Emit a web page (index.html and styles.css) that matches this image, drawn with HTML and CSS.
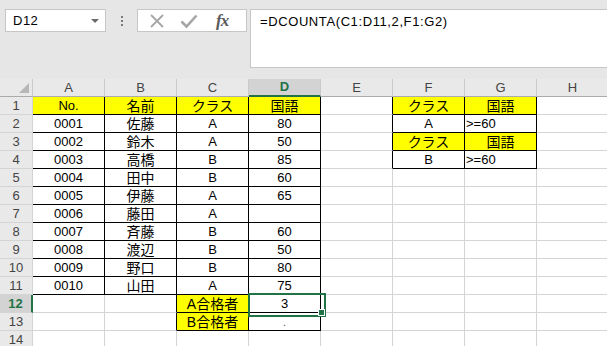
FILE: index.html
```html
<!DOCTYPE html>
<html lang="ja">
<head>
  <meta charset="UTF-8" />
  <title>DCOUNTA</title>
  <link rel="stylesheet" href="styles.css">
</head>
<body>
  <div class="formula-strip">
    <div class="name-box">
      <span class="name-box-text">D12</span>
      <span class="name-box-arrow"></span>
    </div>
    <div class="grip"><span></span><span></span><span></span></div>
    <div class="fx-buttons">
      <svg class="fx-icon" width="16" height="16" viewBox="0 0 16 16"><path d="M2 2l12 12M14 2L2 14" stroke="#a6a6a6" stroke-width="1.8" fill="none"/></svg>
      <svg class="fx-icon" width="18" height="16" viewBox="0 0 18 16"><path d="M1.5 8.5l5 5L16.5 2.5" stroke="#a6a6a6" stroke-width="2.6" fill="none"/></svg>
      <span class="fx-label">fx</span>
    </div>
    <div class="formula-box">=DCOUNTA(C1:D11,2,F1:G2)</div>
  </div>

  <table class="sheet">
    <colgroup>
      <col class="col-rh">
      <col><col><col><col><col><col><col><col>
    </colgroup>
    <tr class="col-heads">
      <th class="corner"><span class="corner-tri"></span></th>
      <th>A</th><th>B</th><th>C</th><th class="on">D</th><th>E</th><th>F</th><th>G</th><th>H</th>
    </tr>
    <tr>
      <th class="rh">1</th>
      <td class="b y">No.</td><td class="b y jp">名前</td><td class="b y jp">クラス</td><td class="b y jp">国語</td>
      <td class="edge-r"></td><td class="b y jp">クラス</td><td class="b y jp">国語</td><td></td>
    </tr>
    <tr>
      <th class="rh">2</th>
      <td class="b">0001</td><td class="b jp">佐藤</td><td class="b">A</td><td class="b">80</td>
      <td class="edge-r"></td><td class="b">A</td><td class="b left">&gt;=60</td><td></td>
    </tr>
    <tr>
      <th class="rh">3</th>
      <td class="b">0002</td><td class="b jp">鈴木</td><td class="b">A</td><td class="b">50</td>
      <td class="edge-r"></td><td class="b y jp">クラス</td><td class="b y jp">国語</td><td></td>
    </tr>
    <tr>
      <th class="rh">4</th>
      <td class="b">0003</td><td class="b jp">高橋</td><td class="b">B</td><td class="b">85</td>
      <td class="edge-r"></td><td class="b">B</td><td class="b left">&gt;=60</td><td></td>
    </tr>
    <tr>
      <th class="rh">5</th>
      <td class="b">0004</td><td class="b jp">田中</td><td class="b">B</td><td class="b">60</td>
      <td></td><td></td><td></td><td></td>
    </tr>
    <tr>
      <th class="rh">6</th>
      <td class="b">0005</td><td class="b jp">伊藤</td><td class="b">A</td><td class="b">65</td>
      <td></td><td></td><td></td><td></td>
    </tr>
    <tr>
      <th class="rh">7</th>
      <td class="b">0006</td><td class="b jp">藤田</td><td class="b">A</td><td class="b"></td>
      <td></td><td></td><td></td><td></td>
    </tr>
    <tr>
      <th class="rh">8</th>
      <td class="b">0007</td><td class="b jp">斉藤</td><td class="b">B</td><td class="b">60</td>
      <td></td><td></td><td></td><td></td>
    </tr>
    <tr>
      <th class="rh">9</th>
      <td class="b">0008</td><td class="b jp">渡辺</td><td class="b">B</td><td class="b">50</td>
      <td></td><td></td><td></td><td></td>
    </tr>
    <tr>
      <th class="rh">10</th>
      <td class="b">0009</td><td class="b jp">野口</td><td class="b">B</td><td class="b">80</td>
      <td></td><td></td><td></td><td></td>
    </tr>
    <tr>
      <th class="rh">11</th>
      <td class="b">0010</td><td class="b jp">山田</td><td class="b">A</td><td class="b">75</td>
      <td></td><td></td><td></td><td></td>
    </tr>
    <tr>
      <th class="rh on">12</th>
      <td></td><td class="edge-r"></td><td class="b y jp">A合格者</td><td class="b selected">3</td>
      <td></td><td></td><td></td><td></td>
    </tr>
    <tr>
      <th class="rh">13</th>
      <td></td><td class="edge-r"></td><td class="b y jp">B合格者</td><td class="b dim">.</td>
      <td></td><td></td><td></td><td></td>
    </tr>
    <tr>
      <th class="rh">14</th>
      <td></td><td></td><td></td><td></td>
      <td></td><td></td><td></td><td></td>
    </tr>
  </table>
</body>
</html>
```

FILE: styles.css
```css
:root {
  --chrome: #e6e6e6;
  --head: #e9e9e9;
  --grid: #d4d4d4;
  --green: #217346;
}
* { margin: 0; padding: 0; box-sizing: border-box; }
body {
  width: 607px;
  height: 346px;
  overflow: hidden;
  background: #fff;
  font-family: "Liberation Sans", "Noto Sans CJK JP", sans-serif;
  color: #000;
}

/* formula bar */
.formula-strip {
  height: 79px;
  background: var(--chrome);
  display: flex;
  align-items: flex-start;
  padding: 9px 0 0 5px;
}
.name-box {
  width: 101px;
  height: 23px;
  background: #fff;
  border: 1px solid #c6c6c6;
  display: flex;
  align-items: center;
  justify-content: space-between;
  padding: 0 6px 0 7px;
  font-size: 13px;
}
.name-box-text { letter-spacing: 0.5px; }
.name-box-arrow {
  width: 0;
  height: 0;
  border-left: 4px solid transparent;
  border-right: 4px solid transparent;
  border-top: 4px solid #6b6b6b;
}
.grip {
  width: 31px;
  height: 23px;
  display: flex;
  flex-direction: column;
  align-items: center;
  justify-content: center;
  gap: 2px;
}
.grip span {
  width: 2px;
  height: 2px;
  background: #7a7a7a;
}
.fx-buttons {
  width: 110px;
  height: 23px;
  background: #fff;
  border: 1px solid #c6c6c6;
  display: flex;
  align-items: center;
  padding-left: 11px;
  gap: 15px;
}
.fx-label {
  font-family: "Liberation Serif", serif;
  font-style: italic;
  font-weight: bold;
  font-size: 17px;
  color: #5a5a5a;
  margin-left: 3px;
  letter-spacing: -1px;
}
.formula-box {
  flex: 1;
  height: 59px;
  margin-left: 3px;
  background: #fff;
  border: 1px solid #c6c6c6;
  border-right: none;
  padding: 4px 0 0 9px;
  font-size: 13px;
  letter-spacing: 0.6px;
}

/* sheet */
.sheet {
  border-collapse: separate;
  border-spacing: 0;
  table-layout: fixed;
  width: 609px;
}
.sheet col { width: 72px; }
.sheet col.col-rh { width: 33px; }
.sheet th, .sheet td {
  height: 18px;
  padding: 0 2px;
  border-right: 1px solid var(--grid);
  border-bottom: 1px solid var(--grid);
  font-size: 13px;
  font-weight: normal;
  line-height: 16px;
  text-align: center;
  vertical-align: bottom;
  white-space: nowrap;
  overflow: hidden;
}
.sheet td.jp { font-size: 14px; }
.col-heads th {
  background: var(--head);
  color: #444;
  border-right: 1px solid #c9c9c9;
  border-bottom: 1px solid #ababab;
  vertical-align: middle;
}
.col-heads th.on {
  background: #d3d3d3;
  color: var(--green);
  font-weight: bold;
  border-bottom: 2px solid var(--green);
}
.corner { position: relative; }
.corner-tri {
  position: absolute;
  right: 3px;
  bottom: 3px;
  width: 0;
  height: 0;
  border-left: 10px solid transparent;
  border-bottom: 10px solid #b7b7b7;
}
.rh {
  background: var(--head);
  color: #444;
  border-right: 1px solid #ababab;
  border-bottom: 1px solid #c9c9c9;
}
.sheet th.rh { vertical-align: middle; }
.rh.on {
  background: #d3d3d3;
  color: var(--green);
  font-weight: bold;
  border-right: 2px solid var(--green);
}

.sheet td.b {
  border-right-color: #000;
  border-bottom-color: #000;
}
.sheet td.edge-r { border-right-color: #000; }
.y { background: #ffff00; }
.sheet td.left { text-align: left; padding-left: 1px; }
.sheet td.dim { color: #555; font-size: 11px; }

.sheet td.selected {
  position: relative;
  overflow: visible;
}
.selected::after {
  content: "";
  position: absolute;
  left: -1px;
  top: -2px;
  width: 74px;
  height: 20px;
  border: 2px solid var(--green);
}
.selected::before {
  content: "";
  position: absolute;
  right: -4px;
  bottom: -3px;
  width: 5px;
  height: 5px;
  background: var(--green);
  outline: 1px solid #fff;
  z-index: 1;
}
```
